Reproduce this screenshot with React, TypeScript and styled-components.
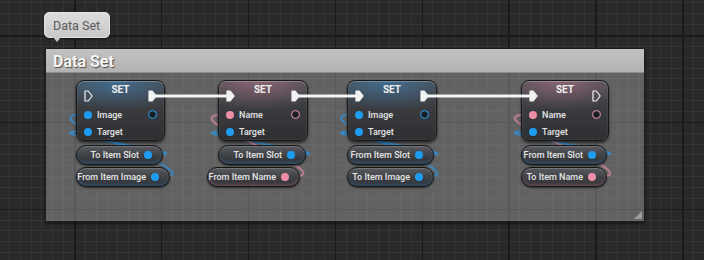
import React from 'react';
import styled, { createGlobalStyle } from 'styled-components';

const Global = createGlobalStyle`
  html, body { margin: 0; padding: 0; background: #292929; }
  body { font-family: Roboto, "Liberation Sans", sans-serif; }
`;

const BLUE = '#1e9cf2';
const PINK = '#ec8ea6';

type Tint = 'blue' | 'pink';
const glow = (t: Tint, a: number) => (t === 'blue' ? `rgba(60,140,205,${a})` : `rgba(200,125,150,${a})`);
const pinColor = (t: Tint) => (t === 'blue' ? BLUE : PINK);

const Viewport = styled.div`
  width: 704px;
  height: 260px;
  overflow: hidden;
  box-sizing: border-box;
  padding: 12px 0 0 44px;
  display: flex;
  flex-direction: column;
  align-items: flex-start;
  background-color: #292929;
  background-image:
    repeating-linear-gradient(90deg, #1a1a1a -12.9px, #1a1a1a -11.4px, transparent -11.4px, transparent 74px),
    repeating-linear-gradient(180deg, #1a1a1a -51.9px, #1a1a1a -50.4px, transparent -50.4px, transparent 35px),
    repeating-linear-gradient(90deg, #353535 -2.02px, #353535 -1.02px, transparent -1.02px, transparent 8.84px),
    repeating-linear-gradient(180deg, #353535 -8.44px, #353535 -7.44px, transparent -7.44px, transparent 2.42px);
`;

const Tooltip = styled.div`
  position: relative;
  width: 66px;
  height: 26px;
  box-sizing: border-box;
  border-radius: 5px;
  background: linear-gradient(180deg, #dcdcdc, #c8c8c8);
  border: 1px solid #e4e4e4;
  box-shadow: 0 1px 2px rgba(0, 0, 0, 0.55);
  color: #5a5a5a;
  font-size: 12.5px;
  display: flex;
  align-items: center;
  padding-left: 8px;
  &::after {
    content: '';
    position: absolute;
    left: 8px;
    bottom: -5px;
    border-left: 4px solid transparent;
    border-right: 4px solid transparent;
    border-top: 5px solid #c8c8c8;
  }
`;

const Comment = styled.section`
  margin: 10px 0 0 1px;
  width: 600px;
  height: 174px;
  box-sizing: border-box;
  border: 1px solid rgba(25, 25, 25, 0.7);
  display: flex;
  flex-direction: column;
  box-shadow: 0 2px 3px rgba(0, 0, 0, 0.45);
`;

const CommentHeader = styled.div`
  height: 24px;
  flex: none;
  box-sizing: border-box;
  background: linear-gradient(180deg, #c2c2c2, #b3b3b3);
  border-bottom: 1px solid #8c8c8c;
  color: #f6f6f6;
  font-weight: 700;
  font-size: 16px;
  padding: 2px 0 0 7px;
  display: flex;
  align-items: center;
  text-shadow: 1px 1px 1px rgba(0, 0, 0, 0.6);
`;

const CommentBody = styled.div`
  flex: 1;
  position: relative;
  background: rgba(170, 170, 170, 0.44);
  display: flex;
  align-items: flex-start;
  padding-top: 7px;
`;

const Resize = styled.div`
  position: absolute;
  right: 2px;
  bottom: 2px;
  width: 0;
  height: 0;
  border-left: 8px solid transparent;
  border-bottom: 8px solid #9a9a9a;
`;

const WireLayer = styled.svg<{ $z: number }>`
  position: absolute;
  left: 0;
  top: 0;
  width: 598px;
  height: 148px;
  pointer-events: none;
  z-index: ${(p) => p.$z};
`;

const Column = styled.div<{ $ml: number; $w: number }>`
  position: relative;
  z-index: 1;
  margin-left: ${(p) => p.$ml}px;
  width: ${(p) => p.$w}px;
  flex: none;
  display: flex;
  flex-direction: column;
  align-items: flex-start;
  gap: 2px;
`;

const NodeBox = styled.div<{ $w: number; $tint: Tint }>`
  width: ${(p) => p.$w}px;
  height: 61px;
  margin-bottom: 2px;
  box-sizing: border-box;
  border-radius: 8px;
  border: 1px solid #161616;
  padding: 3px 7px 0 7px;
  display: flex;
  flex-direction: column;
  background:
    radial-gradient(ellipse 80% 50% at 45% 0%, ${(p) => glow(p.$tint, 0.5)}, transparent 100%),
    linear-gradient(180deg, #4a4d52 0%, #3a3c40 45%, #2e2f33 100%);
  box-shadow: inset 0 1px 0 rgba(255, 255, 255, 0.2), inset 0 0 0 1px rgba(255, 255, 255, 0.06),
    0 2px 3px rgba(0, 0, 0, 0.6);
`;

const NodeHeader = styled.div`
  height: 22px;
  display: grid;
  grid-template-columns: 9px 1fr 9px;
`;

const Title = styled.div`
  align-self: start;
  text-align: center;
  font-size: 10px;
  font-weight: 700;
  line-height: 12px;
  color: #f0f0f0;
`;

const ExecSvg = styled.svg`
  margin-top: 6px;
  display: block;
`;

const PinRow = styled.div`
  height: 17px;
  display: flex;
  align-items: center;
  gap: 5px;
  font-size: 9px;
  font-weight: 500;
  color: #e6e6e6;
`;

const Dot = styled.span<{ $c: string }>`
  width: 8px;
  height: 8px;
  border-radius: 50%;
  background: ${(p) => p.$c};
  flex: none;
`;

const OutRing = styled.span<{ $c: string }>`
  margin-left: auto;
  width: 9px;
  height: 9px;
  box-sizing: border-box;
  border-radius: 50%;
  border: 1.5px solid ${(p) => p.$c};
  background: radial-gradient(circle, #1a1c20 0 45%, #2a3440 60%);
  flex: none;
`;

const Pill = styled.div<{ $w: number; $off: number; $tint: Tint }>`
  width: ${(p) => p.$w}px;
  margin-left: ${(p) => p.$off}px;
  height: 20px;
  box-sizing: border-box;
  border-radius: 10px;
  border: 1px solid #161616;
  background: linear-gradient(180deg, #585b60 0%, #404246 50%, #2e2f32 100%);
  box-shadow: inset 0 1px 0 rgba(255, 255, 255, 0.16), inset 0 -3px 4px -2px ${(p) => glow(p.$tint, 0.5)},
    0 1px 2px rgba(0, 0, 0, 0.6);
  display: flex;
  align-items: center;
  justify-content: flex-end;
  gap: 5px;
  padding-right: 10px;
  font-size: 9px;
  font-weight: 500;
  color: #e6e6e6;
  white-space: nowrap;
`;

const Exec = ({ filled }: { filled: boolean }) => (
  <ExecSvg width="9" height="12" viewBox="0 0 9 12">
    <path
      d="M1 1 L4.2 1 L8.2 6 L4.2 11 L1 11 Z"
      fill={filled ? '#f2f2f2' : 'none'}
      stroke="#f2f2f2"
      strokeWidth="1.2"
      strokeLinejoin="round"
    />
  </ExecSvg>
);

type PinDef = { label: string; tint: Tint };
type PillDef = { label: string; tint: Tint; w: number; off?: number };
type ColDef = {
  ml: number;
  w: number;
  tint: Tint;
  execIn: boolean;
  execOut: boolean;
  value: PinDef;
  pills: PillDef[];
};

const columns: ColDef[] = [
  {
    ml: 30, w: 89, tint: 'blue', execIn: false, execOut: true,
    value: { label: 'Image', tint: 'blue' },
    pills: [
      { label: 'To Item Slot', tint: 'blue', w: 87 },
      { label: 'From Item Image', tint: 'blue', w: 94 },
    ],
  },
  {
    ml: 53, w: 90, tint: 'pink', execIn: true, execOut: true,
    value: { label: 'Name', tint: 'pink' },
    pills: [
      { label: 'To Item Slot', tint: 'blue', w: 88 },
      { label: 'From Item Name', tint: 'pink', w: 93, off: -11 },
    ],
  },
  {
    ml: 39, w: 90, tint: 'blue', execIn: true, execOut: true,
    value: { label: 'Image', tint: 'blue' },
    pills: [
      { label: 'From Item Slot', tint: 'blue', w: 87 },
      { label: 'To Item Image', tint: 'blue', w: 87 },
    ],
  },
  {
    ml: 84, w: 88, tint: 'pink', execIn: true, execOut: false,
    value: { label: 'Name', tint: 'pink' },
    pills: [
      { label: 'From Item Slot', tint: 'blue', w: 86 },
      { label: 'To Item Name', tint: 'pink', w: 86 },
    ],
  },
];

// data wires in page coordinates: [fromX, fromY, toX, toY, tint]
const dataWires: [number, number, number, number, Tint][] = [
  [152, 155, 84, 131.5, 'blue'],
  [159, 177, 84, 114.5, 'blue'],
  [295, 155, 226, 131.5, 'blue'],
  [289, 177, 226, 114.5, 'pink'],
  [423, 155, 355, 131.5, 'blue'],
  [423, 177, 355, 114.5, 'blue'],
  [596, 155, 529, 131.5, 'blue'],
  [596, 177, 529, 114.5, 'pink'],
];

const execWires: [number, number][] = [
  [155, 227],
  [298, 356],
  [427, 530],
];

const T = 68;

const wirePath = (x1: number, y1: number, x2: number, y2: number) =>
  `M${x1} ${y1} C${x1 + T} ${y1}, ${x2 - T} ${y2}, ${x2} ${y2}`;

export default function App() {
  return (
    <>
      <Global />
      <Viewport>
        <Tooltip>Data Set</Tooltip>
        <Comment>
          <CommentHeader>Data Set</CommentHeader>
          <CommentBody>
            <WireLayer $z={0} viewBox="46 73 598 148">
              {dataWires.map(([x1, y1, x2, y2, t], i) => (
                <g key={i} fill="none">
                  <path
                    d={wirePath(x1, y1, x2, y2)}
                    stroke={t === 'blue' ? 'rgba(35,150,240,0.18)' : 'rgba(235,140,165,0.18)'}
                    strokeWidth="3.5"
                  />
                  <path
                    d={wirePath(x1, y1, x2, y2)}
                    stroke={t === 'blue' ? 'rgba(40,155,242,0.75)' : 'rgba(236,142,166,0.75)'}
                    strokeWidth="1.3"
                  />
                </g>
              ))}
            </WireLayer>
            {columns.map((c, i) => (
              <Column key={i} $ml={c.ml} $w={c.w}>
                <NodeBox $w={c.w} $tint={c.tint}>
                  <NodeHeader>
                    <Exec filled={c.execIn} />
                    <Title>SET</Title>
                    <Exec filled={c.execOut} />
                  </NodeHeader>
                  <PinRow>
                    <Dot $c={pinColor(c.value.tint)} />
                    {c.value.label}
                    <OutRing $c={pinColor(c.value.tint)} />
                  </PinRow>
                  <PinRow>
                    <Dot $c={BLUE} />
                    Target
                  </PinRow>
                </NodeBox>
                {c.pills.map((p, j) => (
                  <Pill key={j} $w={p.w} $off={p.off ?? 0} $tint={p.tint}>
                    {p.label}
                    <Dot $c={pinColor(p.tint)} />
                  </Pill>
                ))}
              </Column>
            ))}
            <WireLayer $z={2} viewBox="46 73 598 148">
              {execWires.map(([x1, x2], i) => (
                <line key={i} x1={x1} y1={96} x2={x2} y2={96} stroke="#f4f4f4" strokeWidth="3" />
              ))}
            </WireLayer>
            <Resize />
          </CommentBody>
        </Comment>
      </Viewport>
    </>
  );
}
